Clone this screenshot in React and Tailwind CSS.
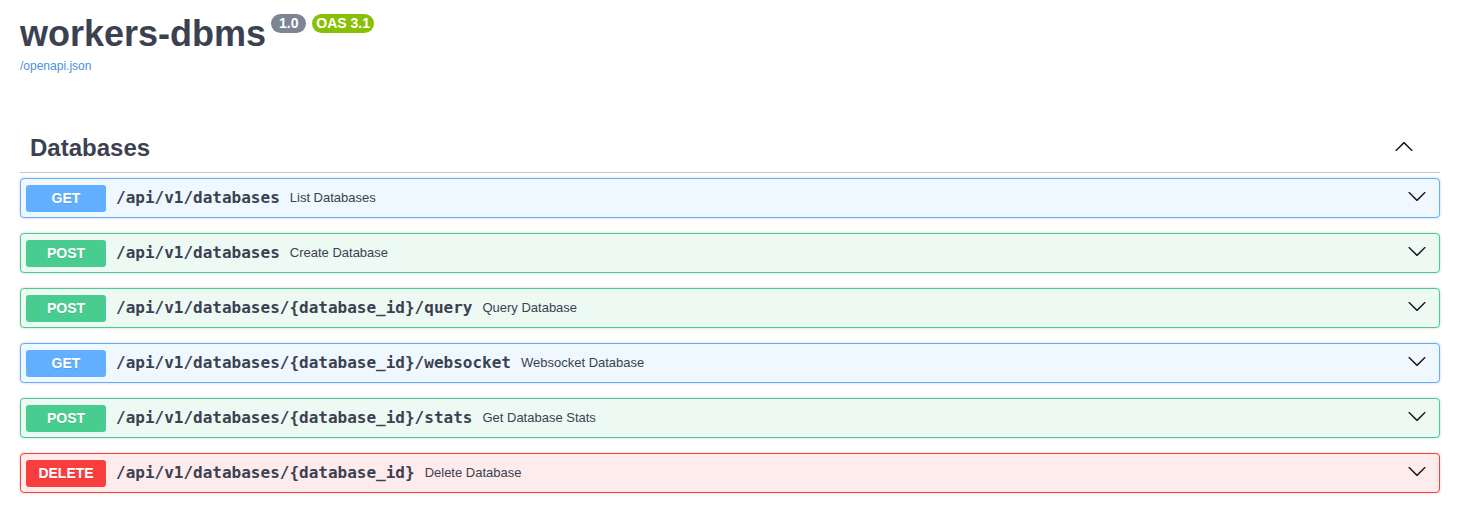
import React from "react";

const rows = [
  { m: "GET", path: "/api/v1/databases", desc: "List Databases" },
  { m: "POST", path: "/api/v1/databases", desc: "Create Database" },
  { m: "POST", path: "/api/v1/databases/{database_id}/query", desc: "Query Database" },
  { m: "GET", path: "/api/v1/databases/{database_id}/websocket", desc: "Websocket Database" },
  { m: "POST", path: "/api/v1/databases/{database_id}/stats", desc: "Get Database Stats" },
  { m: "DELETE", path: "/api/v1/databases/{database_id}", desc: "Delete Database" },
];

const styles = {
  GET: { box: "border-[#61affe] bg-[#eff7ff]", badge: "bg-[#61affe]" },
  POST: { box: "border-[#49cc90] bg-[#edfaf4]", badge: "bg-[#49cc90]" },
  DELETE: { box: "border-[#f93e3e] bg-[#feebeb]", badge: "bg-[#f93e3e]" },
};

function ArrowDown({ className }) {
  return (
    <svg width="20" height="20" viewBox="0 0 20 20" className={className}>
      <path
        fill="#1b1b1b"
        d="M17.418 6.109c.272-.268.709-.268.979 0s.271.701 0 .969l-7.908 7.83c-.27.268-.707.268-.979 0l-7.908-7.83c-.27-.268-.27-.701 0-.969.271-.268.709-.268.979 0L10 13.25l7.418-7.141z"
      />
    </svg>
  );
}

function ArrowUp({ className }) {
  return (
    <svg width="20" height="20" viewBox="0 0 20 20" className={className}>
      <path
        fill="#1b1b1b"
        d="M17.418 14.908c.272.268.709.268.979 0s.271-.701 0-.969l-7.908-7.83c-.27-.268-.707-.268-.979 0l-7.908 7.83c-.27.268-.27.701 0 .969.271.268.709.268.979 0L10 7.767l7.418 7.141z"
      />
    </svg>
  );
}

export default function App() {
  return (
    <div className="w-[1464px] bg-white pl-[20px] pr-[24px] pb-[20px] font-['Liberation_Sans',Arial,sans-serif] text-[#3b4151]">
      <div className="pt-[16px] flex items-start">
        <h2 className="text-[36px] leading-[36px] font-bold text-[#3b4151]">workers-dbms</h2>
        <span className="ml-[5px] mt-[-2px] h-[19px] flex items-center rounded-full bg-[#7d8492] px-[4px] text-[14px] font-bold text-white whitespace-pre leading-[19px]">
          {" 1.0 "}
        </span>
        <span className="ml-[6px] mt-[-2px] h-[19px] flex items-center rounded-full bg-[#89bf04] px-[4px] text-[14px] font-bold text-white whitespace-pre leading-[19px]">
          OAS 3.1
        </span>
      </div>
      <div className="mt-[6px] text-[12px] leading-[16px]">
        <a className="text-[#4990e2]">/openapi.json</a>
      </div>

      <div className="mt-[48px]">
        <div className="h-[51px] border-b border-[#c4c6cb] flex items-center pl-[10px] pr-[26px] mb-[5px]">
          <h3 className="text-[24px] font-bold leading-[28px] text-[#3b4151] flex-1 mt-[1px]">Databases</h3>
          <ArrowUp className="mb-[2px]" />
        </div>

        <div className="flex flex-col gap-[15px]">
          {rows.map((r, i) => (
            <div
              key={i}
              className={`h-[40px] flex items-center border rounded-[4px] shadow-[0_0_3px_rgba(0,0,0,0.19)] pl-[5px] pr-[12px] ${styles[r.m].box}`}
            >
              <span
                className={`w-[80px] h-[27px] flex items-center justify-center rounded-[3px] text-white text-[14px] font-bold [text-shadow:0_1px_0_rgba(0,0,0,0.1)] ${styles[r.m].badge}`}
              >
                {r.m}
              </span>
              <span className="px-[10px] font-['DejaVu_Sans_Mono',monospace] text-[16px] font-bold text-[#3b4151]">
                {r.path}
              </span>
              <span className="text-[13px] text-[#3b4151] flex-1">{r.desc}</span>
              <ArrowDown className="mb-[5px]" />
            </div>
          ))}
        </div>
      </div>
    </div>
  );
}
